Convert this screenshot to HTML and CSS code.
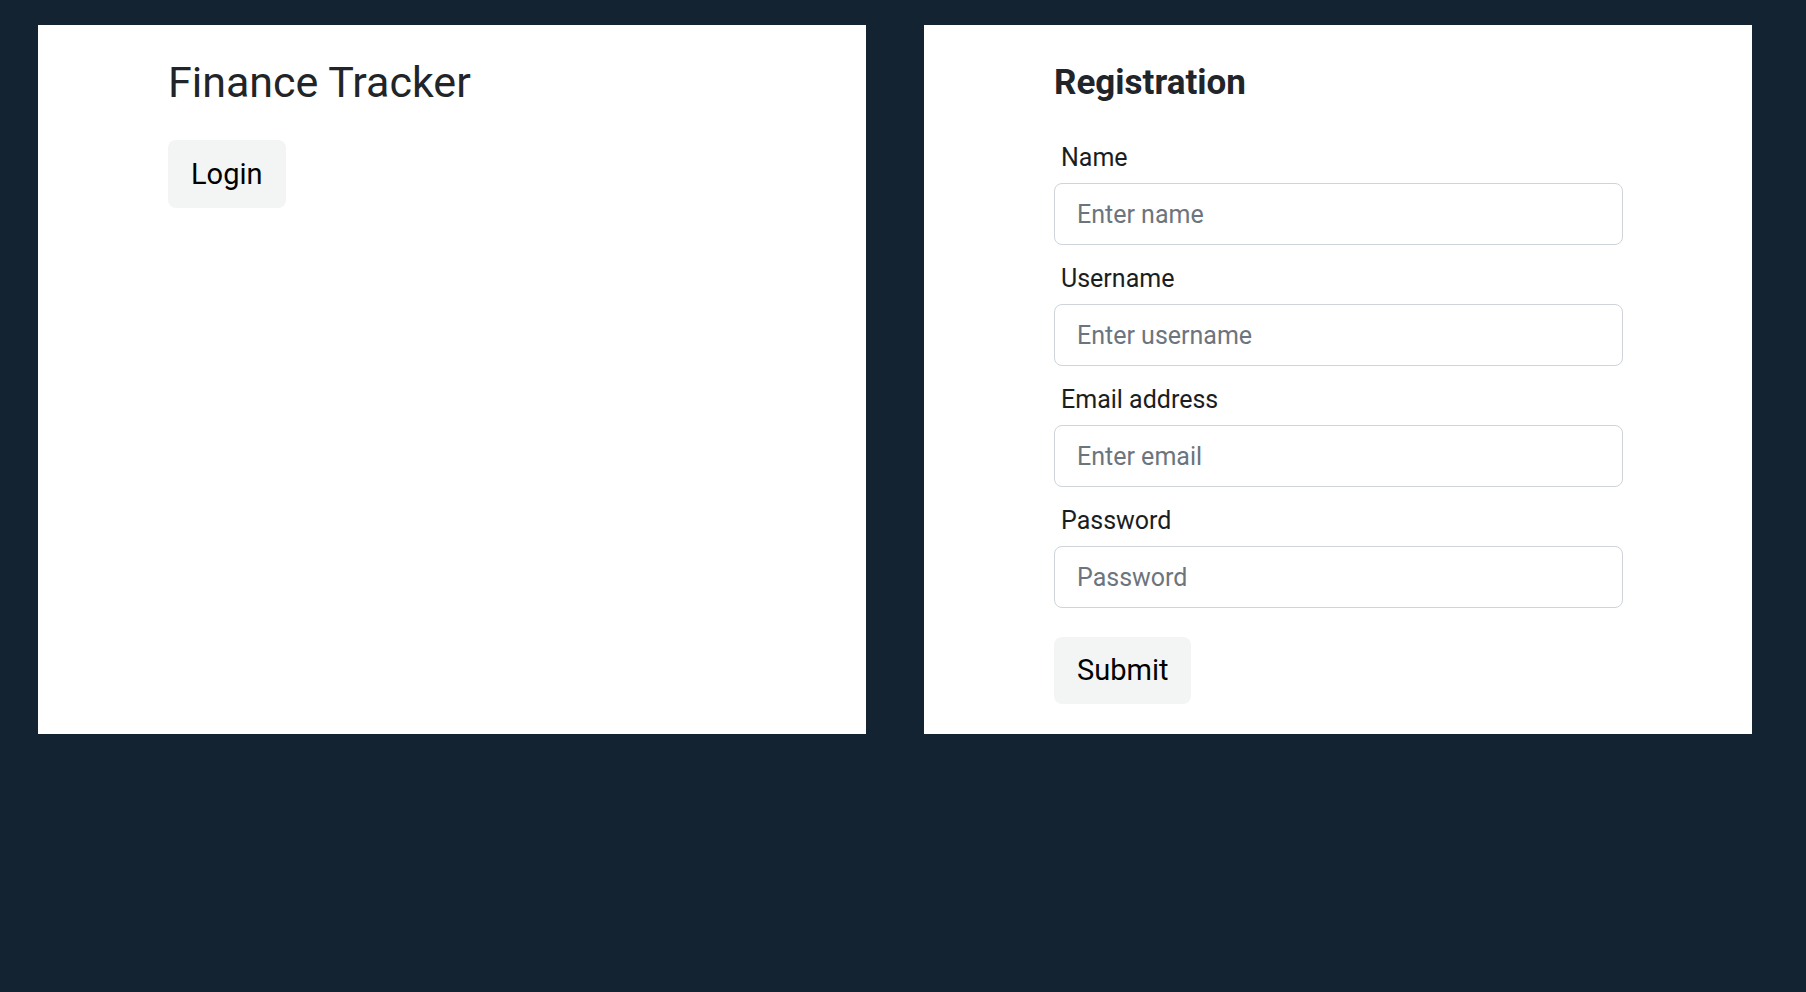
FILE: index.html
```html
<!DOCTYPE html>
<html lang="en">
<head>
<meta charset="utf-8">
<title>Finance Tracker</title>
<link rel="stylesheet" href="styles.css">
</head>
<body>
<main class="page">
  <section class="panel panel-left">
    <h1 class="app-title">Finance Tracker</h1>
    <button class="btn" type="button">Login</button>
  </section>
  <section class="panel panel-right">
    <h3 class="form-title">Registration</h3>
    <form class="form">
      <div class="field">
        <label class="field-label" for="name">Name</label>
        <input class="field-input" id="name" type="text" placeholder="Enter name">
      </div>
      <div class="field">
        <label class="field-label" for="username">Username</label>
        <input class="field-input" id="username" type="text" placeholder="Enter username">
      </div>
      <div class="field">
        <label class="field-label" for="email">Email address</label>
        <input class="field-input" id="email" type="email" placeholder="Enter email">
      </div>
      <div class="field">
        <label class="field-label" for="password">Password</label>
        <input class="field-input" id="password" type="password" placeholder="Password">
      </div>
      <button class="btn btn-submit" type="submit">Submit</button>
    </form>
  </section>
</main>
</body>
</html>
```

FILE: styles.css
```css
* { box-sizing: border-box; }

html, body {
  margin: 0;
  padding: 0;
}

body {
  background: #132332;
  font-family: Roboto, "Liberation Sans", sans-serif;
  color: #212529;
  height: 992px;
}

.page {
  display: flex;
  align-items: stretch;
  gap: 58px;
  padding: 25px 54px 0 38px;
}

.panel {
  width: 828px;
  background: #ffffff;
  padding: 0 129px 30px 130px;
}

.panel-left {
  padding-top: 32px;
}

.panel-right {
  padding-top: 37px;
}

.app-title {
  margin: 0 0 31px;
  font-size: 43px;
  font-weight: 400;
  line-height: 1.2;
  color: #212529;
}

.form-title {
  margin: 0 0 36px;
  font-size: 35px;
  font-weight: 700;
  line-height: 42px;
  color: #212529;
}

.form {
  display: flex;
  flex-direction: column;
  align-items: flex-start;
}

.field {
  width: 100%;
  margin-bottom: 16px;
}

.field:last-of-type {
  margin-bottom: 29px;
}

.field-label {
  display: block;
  padding: 1px 0 0 7px;
  margin-bottom: 9px;
  font-size: 25px;
  line-height: 33px;
  color: #1b1e21;
}

.field-input {
  display: block;
  width: 100%;
  height: 62px;
  padding: 0 22px;
  border: 1px solid #ced4da;
  border-radius: 8px;
  font-family: Roboto, "Liberation Sans", sans-serif;
  font-size: 25px;
  color: #212529;
  background: #ffffff;
  outline: none;
}

.field-input::placeholder {
  color: #6c757d;
  opacity: 1;
}

.btn {
  display: inline-block;
  height: 68px;
  padding: 0 23px;
  border: none;
  border-radius: 8px;
  background: #f3f5f5;
  color: #000000;
  font-family: Roboto, "Liberation Sans", sans-serif;
  font-size: 29px;
  line-height: 68px;
  cursor: pointer;
}

.btn-submit {
  height: 67px;
  line-height: 67px;
}
```
